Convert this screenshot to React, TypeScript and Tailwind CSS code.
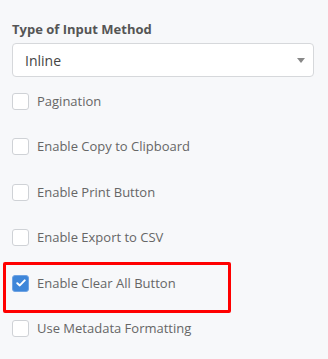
import React, { useState } from 'react';

// Options shown under the input method selector
const options = [
  'Pagination',
  'Enable Copy to Clipboard',
  'Enable Print Button',
  'Enable Export to CSV',
  'Enable Clear All Button',
  'Use Metadata Formatting',
];

function Checkbox({ checked }: { checked: boolean }) {
  if (checked) {
    return (
      <span className="flex h-[17px] w-[17px] items-center justify-center rounded-[3px] border border-[#6fa3e3] bg-[#3e86d9]">
        <svg width="10" height="8" viewBox="0 0 10 8" fill="none">
          <path d="M1.3 4.2 L3.8 6.4 L8.7 1.4" stroke="#fff" strokeWidth="2" strokeLinecap="round" strokeLinejoin="round" />
        </svg>
      </span>
    );
  }
  return <span className="block h-[17px] w-[17px] rounded-[3px] border border-[#cfd2d6] bg-white" />;
}

export default function App() {
  const [checked] = useState<string[]>(['Enable Clear All Button']);

  return (
    <div
      className="h-[359px] w-[328px] overflow-hidden bg-[#f7f8fa] px-3 pt-[20px]"
      style={{ fontFamily: '"Open Sans", "Liberation Sans", sans-serif' }}
    >
      <div className="text-[13px] font-bold leading-[18px] text-[#555]">Type of Input Method</div>
      <div className="mt-[5px] flex h-[34px] w-[302px] items-center justify-between rounded-[4px] border border-[#d6d8db] bg-white pl-[12px] pr-[8px]">
        <span className="text-[14px] text-[#444]">Inline</span>
        <svg width="8" height="5" viewBox="0 0 8 5">
          <path d="M0 0 L8 0 L4 5 Z" fill="#888" />
        </svg>
      </div>
      <div className="mt-[1.5px]">
        {options.map((label) => (
          <div key={label} className="relative flex h-[45.5px] items-center gap-[8px]">
            <Checkbox checked={checked.includes(label)} />
            <span className="text-[13px] text-[#666]">{label}</span>
            {label === 'Enable Clear All Button' && (
              <div className="absolute left-[-9px] top-[1.5px] h-[51px] w-[228px] rounded-[2px] border-[3px] border-[#ff0000]" />
            )}
          </div>
        ))}
      </div>
    </div>
  );
}
